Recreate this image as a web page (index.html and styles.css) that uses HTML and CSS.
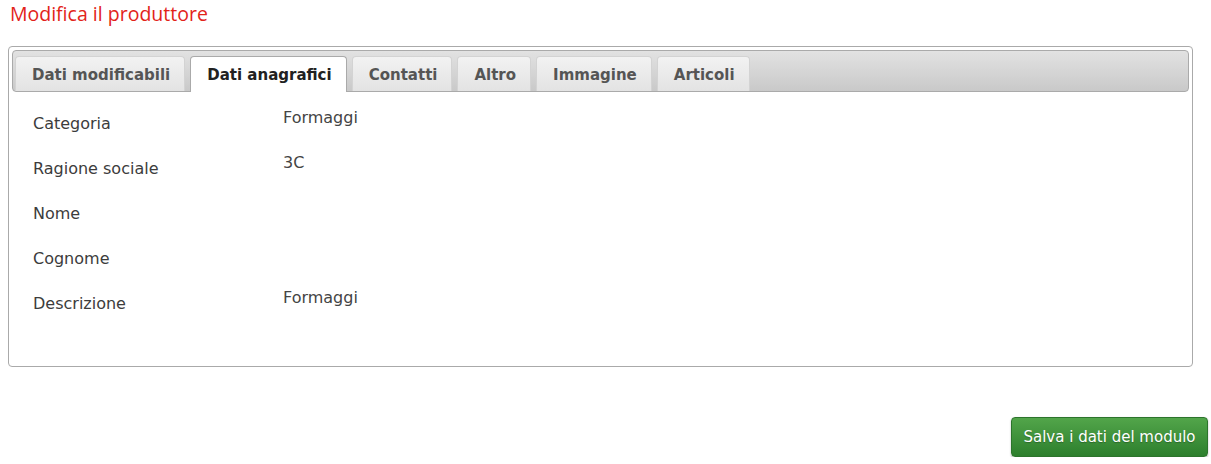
FILE: index.html
```html
<!DOCTYPE html>
<html lang="it">
<head>
<meta charset="utf-8">
<title>Modifica il produttore</title>
<link rel="stylesheet" href="styles.css">
</head>
<body>
<div class="page">
  <h1 class="title">Modifica il produttore</h1>
  <div class="tabs">
    <ul class="tab-nav">
      <li class="tab">Dati modificabili</li>
      <li class="tab active">Dati anagrafici</li>
      <li class="tab">Contatti</li>
      <li class="tab">Altro</li>
      <li class="tab">Immagine</li>
      <li class="tab">Articoli</li>
    </ul>
    <div class="panel">
      <div class="row"><div class="label">Categoria</div><div class="value">Formaggi</div></div>
      <div class="row"><div class="label">Ragione sociale</div><div class="value">3C</div></div>
      <div class="row"><div class="label">Nome</div><div class="value"></div></div>
      <div class="row"><div class="label">Cognome</div><div class="value"></div></div>
      <div class="row"><div class="label">Descrizione</div><div class="value">Formaggi</div></div>
    </div>
  </div>
  <div class="actions">
    <button class="save">Salva i dati del modulo</button>
  </div>
</div>
</body>
</html>
```

FILE: styles.css
```css
* { box-sizing: border-box; }
html, body { margin: 0; padding: 0; background: #fff; }
body { font-family: "DejaVu Sans", Verdana, sans-serif; color: #444; }
.page { padding: 0 0 0 8px; width: 1211px; }
.title {
  margin: 0;
  padding: 0 0 0 2px;
  height: 46px;
  font-family: "Open Sans", "Noto Sans", sans-serif;
  font-weight: 400;
  font-size: 19.5px;
  line-height: 28px;
  color: #e2231a;
}
.tabs {
  width: 1185px;
  border: 1px solid #aaa;
  border-radius: 4px;
  padding: 3px 3px 5px 3px;
}
.tab-nav {
  list-style: none;
  margin: 0;
  padding: 5px 2px 0 2px;
  height: 42px;
  display: flex;
  align-items: flex-start;
  gap: 5px;
  border: 1px solid #aaa;
  border-radius: 4px;
  background: linear-gradient(#e2e2e2, #c9c9c9);
}
.tab {
  height: 35px;
  padding: 2px 14px 0 16px;
  border: 1px solid #d3d3d3;
  border-bottom: 0;
  border-radius: 4px 4px 0 0;
  background: linear-gradient(#f2f2f2, #e3e3e3);
  font-size: 15px;
  font-weight: bold;
  line-height: 33px;
  color: #555;
  white-space: nowrap;
}
.tab.active {
  height: 36px;
  background: #fff;
  border-color: #aaa;
  color: #212121;
}
.panel {
  padding: 16px 20px 28px 21px;
}
.row {
  display: grid;
  grid-template-columns: 250px 1fr;
  height: 45px;
  font-size: 16px;
  line-height: 20px;
}
.label { padding-top: 6px; color: #3c3c3c; }
.value { color: #444; }
.actions {
  display: flex;
  justify-content: flex-end;
  padding: 50px 3px 0 0;
}
.save {
  width: 197px;
  height: 40px;
  border: 1px solid #2c742c;
  border-radius: 4px;
  background: linear-gradient(#52a54a, #2d7f2d);
  color: #fff;
  font-family: "DejaVu Sans", Verdana, sans-serif;
  font-size: 15px;
  text-shadow: 0 1px 1px rgba(0,0,0,0.25);
  box-shadow: 0 1px 2px rgba(0,0,0,0.3);
  padding: 0;
}
```
